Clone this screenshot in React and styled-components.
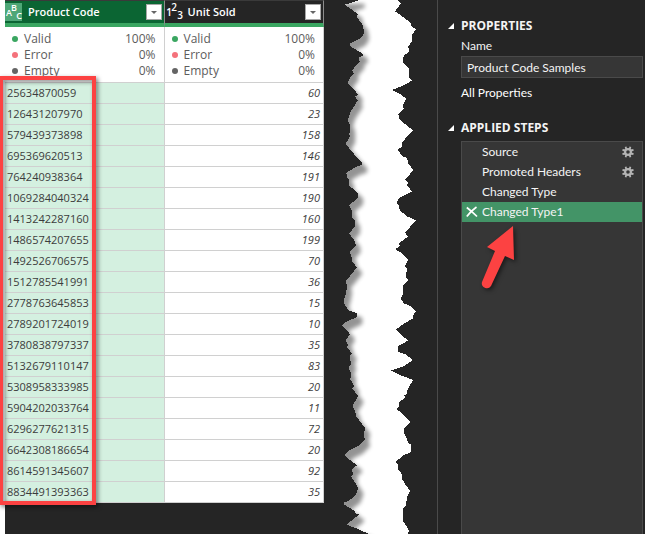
import React, { useState } from 'react'
import styled, { createGlobalStyle } from 'styled-components'

const GlobalStyle = createGlobalStyle`
  * {
    box-sizing: border-box;
  }

  body {
    margin: 0;
    background: #fff;
    font-family: 'Open Sans', 'Noto Sans', sans-serif;
  }

  button, input {
    font: inherit;
    color: inherit;
    margin: 0;
    padding: 0;
    border: 0;
    background: none;
  }
`

const Page = styled.main`
  display: flex;
  min-height: 100vh;
  padding-left: 5px;
`

const Preview = styled.section`
  flex: 3 1 319px;
  background: #252525;
`

const TableArea = styled.div`
  position: relative;
`

const Table = styled.table`
  width: 100%;
  table-layout: fixed;
  border-collapse: separate;
  border-spacing: 0;
  font-size: 11px;
  line-height: 20px;
  color: #3c3c3c;
`

const HeadCell = styled.th`
  padding: 0;
  border-top: 1px solid #3a3a3a;
  border-right: 1px solid #8c8c8c;
  border-bottom: 4px solid #3aa661;
  background: ${p => (p.$selected ? '#0b6533' : '#252525')};
  color: #fff;
`

const HeadContent = styled.div`
  display: flex;
  align-items: center;
  gap: 6px;
  height: 22px;
  padding-right: 2px;
`

const ColumnName = styled.span`
  flex: 1;
  font-weight: 600;
  text-align: left;
`

const TypeIcon = styled.svg`
  flex: none;
  width: 17px;
  height: 18px;
  overflow: visible;
  background: ${p => (p.$selected ? '#4ea777' : 'none')};
  fill: #fff;
`

const FilterButton = styled.button`
  display: flex;
  align-items: center;
  justify-content: center;
  width: 16px;
  height: 16px;
  border: 1px solid #a6a6a6;
  background: #fff;
`

const QualityCell = styled.td`
  padding: 4px 8px 3px 7px;
  border-right: 1px solid #d0d0d0;
  border-bottom: 1px solid #d0d0d0;
  background: #fff;
`

const QualityRow = styled.div`
  display: flex;
  align-items: center;
  font-size: 12px;
  line-height: 16px;
  color: #5c5c5c;
`

const Dot = styled.i`
  width: 6px;
  height: 6px;
  margin-right: 6px;
  border-radius: 50%;
  background: ${p => p.$color};
`

const QualityLabel = styled.span`
  flex: 1;
`

const Cell = styled.td`
  padding: 0 3px 0 2px;
  border-right: 1px solid #d0d0d0;
  border-bottom: 1px solid #d0d0d0;
  background: ${p => (p.$selected ? '#d4f0e0' : '#fff')};
  text-align: ${p => (p.$number ? 'right' : 'left')};
  font-style: ${p => (p.$number ? 'italic' : 'normal')};
`

const Highlight = styled.div`
  position: absolute;
  top: 76px;
  bottom: -2px;
  left: -6px;
  width: 97px;
  border: 4px solid #fc4242;
  filter: drop-shadow(2px 2px 2px rgba(0, 0, 0, 0.5));
  pointer-events: none;
`

const Tear = styled.div`
  flex: none;
  position: relative;
  width: 113px;
  background: #252525;

  svg {
    position: absolute;
    width: 100%;
    height: 100%;
  }
`

const Sidebar = styled.aside`
  position: relative;
  flex: 2 1 208px;
  display: flex;
  flex-direction: column;
  padding: 16px 2px 0 10px;
  border-left: 1px solid #4a4a4a;
  background: #252525;
  color: #f4f4f4;
  font-family: Lato, 'Open Sans', sans-serif;
  font-size: 12px;
  line-height: 20px;
`

const SectionToggle = styled.button`
  display: flex;
  align-items: center;
  gap: 7px;
  font-family: 'Open Sans', sans-serif;
  font-weight: 700;
`

const SectionBody = styled.div`
  display: flex;
  flex-direction: column;
  align-items: flex-start;
  flex: ${p => (p.$grow ? 1 : 'none')};
  padding: ${p => (p.$grow ? '3px 0 0 13px' : '0 0 15px 13px')};
`

const NameInput = styled.input`
  width: 100%;
  height: 22px;
  margin: 0 0 5px;
  padding: 0 5px;
  border: 1px solid #4a4a4a;
  background: #363636;
`

const PropertiesLink = styled.a`
  color: #fff;
  text-decoration: none;
`

const StepList = styled.ul`
  flex: 1;
  width: 100%;
  margin: 0;
  padding: 0;
  border: solid #4a4a4a;
  border-width: 1px 1px 0;
  background: #363636;
  list-style: none;
`

const Step = styled.li`
  display: flex;
  align-items: center;
  height: 20px;
  padding: 0 8px 0 4px;
  background: ${p => (p.$active ? '#439467' : 'transparent')};
`

const StepAction = styled.button`
  display: flex;
  align-items: center;
  justify-content: center;
  width: 12px;
  height: 12px;
`

const StepName = styled.button`
  flex: 1;
  margin-left: ${p => (p.$active ? 4 : 16)}px;
  text-align: left;
`

const Pointer = styled.svg`
  position: absolute;
  top: 220px;
  left: 36px;
  width: 50px;
  height: 80px;
  filter: drop-shadow(2px 2px 2px rgba(0, 0, 0, 0.5));
  pointer-events: none;
`

const columns = [
  { name: 'Product Code', type: 'text', selected: true },
  { name: 'Unit Sold', type: 'number' },
]

const quality = [
  { label: 'Valid', value: '100%', color: '#3aa661' },
  { label: 'Error', value: '0%', color: '#f4727b' },
  { label: 'Empty', value: '0%', color: '#646464' },
]

const rows = [
  ['25634870059', 60],
  ['126431207970', 23],
  ['579439373898', 158],
  ['695369620513', 146],
  ['764240938364', 191],
  ['1069284040324', 190],
  ['1413242287160', 160],
  ['1486574207655', 199],
  ['1492526706575', 70],
  ['1512785541991', 36],
  ['2778763645853', 15],
  ['2789201724019', 10],
  ['3780838797337', 35],
  ['5132679110147', 83],
  ['5308958333985', 20],
  ['5904202033764', 11],
  ['6296277621315', 72],
  ['6642308186654', 20],
  ['8614591345607', 92],
  ['8834491393363', 35],
]

const steps = [
  { name: 'Source', settings: true },
  { name: 'Promoted Headers', settings: true },
  { name: 'Changed Type' },
  { name: 'Changed Type1' },
]

const typeGlyphs = {
  text: [['A', 4, 13], ['B', 9, 8], ['C', 14, 16]],
  number: [['1', 4, 13], ['2', 9, 8], ['3', 15, 16]],
}

// torn paper edges, top to bottom, three units to the pixel
const leftEdge =
  '105,0 60,14 98,42 96,52 114,76 117,100 108,114 76,130 74,138 112,160 114,166 100,174 104,184 90,200 82,212 86,220 72,238 69,250 90,272 98,284 90,290 98,302 76,336 68,362 75,376 76,396 70,402 76,406 62,432 72,444 90,466 112,490 112,494 94,500 64,518 66,532 72,540 ' +
  '72,558 84,566 100,582 98,594 72,616 80,632 82,652 90,662 90,680 72,700 90,724 92,736 74,756 80,772 82,786 96,802 72,832 62,842 66,860 62,884 58,896 58,912 72,932 97,940 97,950 60,968 51,978 72,996 74,1004 62,1020 70,1036 64,1038 80,1060 74,1070 ' +
  '78,1092 70,1104 78,1118 76,1138 88,1160 82,1166 100,1188 82,1218 90,1234 94,1250 108,1268 120,1284 116,1308 120,1318 100,1338 72,1352 60,1364 62,1370 96,1396 80,1408 84,1422 78,1430 84,1438 100,1464 92,1486 72,1502 57,1508 58,1514 88,1532 90,1540 102,1544 64,1574 96,1586 132,1602'

const rightEdge =
  '216,0 228,10 218,24 210,34 236,52 256,68 260,80 273,88 262,104 262,122 250,140 252,154 236,168 234,186 252,206 252,232 261,242 232,258 200,270 226,282 243,296 234,316 236,326 220,342 222,356 240,372 264,391 246,408 232,428 232,438 218,450 232,468 246,474 250,490 264,510 248,532 240,540 ' +
  '250,548 246,556 261,574 226,592 214,606 220,614 224,630 244,648 273,661 256,680 240,698 248,710 222,730 224,738 211,748 228,758 250,778 240,798 246,806 242,830 250,840 234,858 234,880 228,896 236,910 256,918 273,934 262,948 266,954 238,970 213,988 226,1002 249,1022 220,1038 220,1056 240,1062 ' +
  '264,1080 234,1100 198,1111 228,1126 264,1140 246,1172 246,1182 238,1186 240,1194 222,1206 222,1220 214,1226 232,1242 255,1266 238,1284 236,1298 244,1314 250,1328 258,1334 258,1356 236,1366 210,1386 220,1396 220,1408 230,1422 232,1438 240,1452 255,1472 246,1492 242,1518 234,1524 234,1564 246,1580 252,1592 248,1602'

const ColumnTypeIcon = ({ type, selected }) => (
  <TypeIcon $selected={selected} viewBox="0 0 17 18" aria-hidden="true">
    {typeGlyphs[type].map(([char, x, y]) => (
      <text
        key={char}
        x={x}
        y={y}
        fontSize={type === 'text' ? 9 : 10}
        fontWeight="600"
        textAnchor="middle"
      >
        {char}
      </text>
    ))}
  </TypeIcon>
)

const GearIcon = () => (
  <svg width="12" height="12" viewBox="0 0 12 12" fill="none" stroke="#b4b4b4">
    <circle cx="6" cy="6" r="2.9" strokeWidth="2.2" />
    <path strokeWidth="1.8" d="M4.4 3.5L3.6.8M7.6 3.5L8.4.8M4.4 8.5L3.6 11.2M7.6 8.5L8.4 11.2M3.5 4.5L.5 4M3.5 7.5L.5 8M8.5 4.5l3-.5M8.5 7.5l3 .5" />
  </svg>
)

const DeleteIcon = () => (
  <svg width="12" height="12" viewBox="0 0 12 12" fill="none" stroke="#fff">
    <path strokeWidth="1.7" d="M.8 1.5C4 4 8 7.5 11 10.5M10.5 1C7 3.5 3.5 7 .8 10.5" />
  </svg>
)

const Section = ({ title, grow, children }) => (
  <>
    <SectionToggle type="button" aria-expanded="true">
      <svg width="6" height="6" viewBox="0 0 6 6" fill="#fff">
        <path d="M6 0v6H0z" />
      </svg>
      {title}
    </SectionToggle>
    <SectionBody $grow={grow}>{children}</SectionBody>
  </>
)

const QueryTable = () => (
  <TableArea>
    <Table>
      <thead>
        <tr>
          {columns.map(({ name, type, selected }) => (
            <HeadCell key={name} $selected={selected} scope="col">
              <HeadContent>
                <ColumnTypeIcon type={type} selected={selected} />
                <ColumnName>{name}</ColumnName>
                <FilterButton type="button" aria-label={`Filter ${name}`}>
                  <svg width="6" height="3" viewBox="0 0 6 3" fill="#666">
                    <path d="M0 0h6L3 3z" />
                  </svg>
                </FilterButton>
              </HeadContent>
            </HeadCell>
          ))}
        </tr>
      </thead>
      <tbody>
        <tr>
          {columns.map(({ name }) => (
            <QualityCell key={name}>
              {quality.map(({ label, value, color }) => (
                <QualityRow key={label}>
                  <Dot $color={color} />
                  <QualityLabel>{label}</QualityLabel>
                  <span>{value}</span>
                </QualityRow>
              ))}
            </QualityCell>
          ))}
        </tr>
        {rows.map(([code, sold]) => (
          <tr key={code}>
            <Cell $selected>{code}</Cell>
            <Cell $number>{sold}</Cell>
          </tr>
        ))}
      </tbody>
    </Table>
    <Highlight />
  </TableArea>
)

const TornEdge = () => (
  <Tear>
    <svg viewBox="-3 0 339 1602" preserveAspectRatio="none" aria-hidden="true">
      <filter id="soft" x="-20%" y="-5%" width="140%" height="110%">
        <feGaussianBlur stdDeviation="6" />
      </filter>
      <rect x="-3" width="339" height="1602" fill="#fff" />
      <g opacity="0.42" transform="translate(8 18)">
        <polygon
          points={`-60,0 ${leftEdge} -60,1602`}
          stroke="#000"
          strokeWidth="14"
          strokeLinejoin="round"
          filter="url(#soft)"
        />
      </g>
      <g fill="#252525" shapeRendering="crispEdges">
        <polygon points={`-3,0 ${leftEdge} -3,1602`} />
        <polygon points={`336,0 ${rightEdge} 336,1602`} />
      </g>
    </svg>
  </Tear>
)

export default () => {
  const [queryName, setQueryName] = useState('Product Code Samples')
  const [activeStep, setActiveStep] = useState('Changed Type1')

  return (
    <>
      <GlobalStyle />
      <Page>
        <Preview>
          <QueryTable />
        </Preview>
        <TornEdge />
        <Sidebar>
          <Section title="PROPERTIES">
            <label htmlFor="query-name">Name</label>
            <NameInput
              id="query-name"
              value={queryName}
              onChange={e => setQueryName(e.target.value)}
            />
            <PropertiesLink href="#properties">All Properties</PropertiesLink>
          </Section>
          <Section title="APPLIED STEPS" grow>
            <StepList>
              {steps.map(({ name, settings }) => (
                <Step key={name} $active={name === activeStep}>
                  {name === activeStep && (
                    <StepAction type="button" aria-label={`Delete ${name}`}>
                      <DeleteIcon />
                    </StepAction>
                  )}
                  <StepName
                    type="button"
                    $active={name === activeStep}
                    onClick={() => setActiveStep(name)}
                  >
                    {name}
                  </StepName>
                  {settings && (
                    <StepAction type="button" aria-label={`Edit ${name}`}>
                      <GearIcon />
                    </StepAction>
                  )}
                </Step>
              ))}
            </StepList>
          </Section>
          <Pointer viewBox="474 220 50 80" aria-hidden="true">
            <path
              fill="#fc4242"
              d="M513 226l1 34-9-4-14 30a5 5 0 0 1-9-4l13-31-8-4z"
            />
          </Pointer>
        </Sidebar>
      </Page>
    </>
  )
}
